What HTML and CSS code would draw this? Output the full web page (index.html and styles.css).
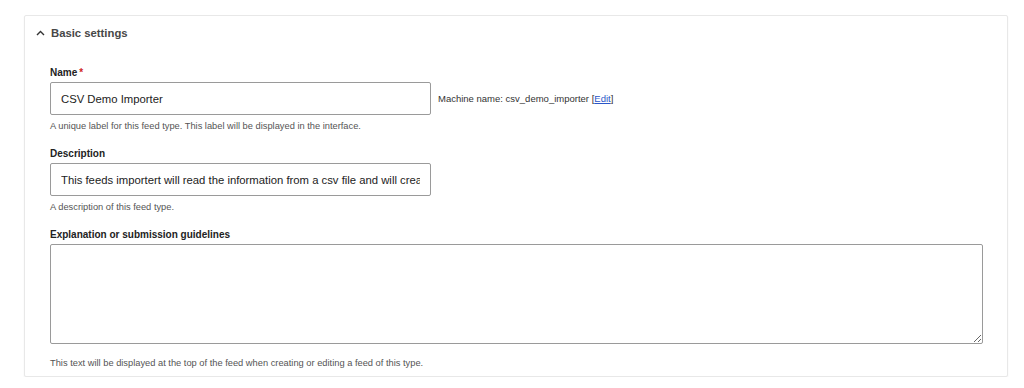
FILE: index.html
```html
<!DOCTYPE html>
<html lang="en">
<head>
    <meta charset="UTF-8">
    <meta name="viewport" content="width=device-width, initial-scale=1.0">
    <title>Basic settings</title>
    <link rel="stylesheet" href="styles.css">
</head>
<body>

    <details class="settings-card" open>
        <summary class="card-title">
            <svg class="chevron" width="9" height="6" viewBox="0 0 9 6">
                <path d="M1 5 L4.5 1.5 L8 5" fill="none" stroke="#333" stroke-width="1.4"/>
            </svg>
            Basic settings
        </summary>

        <div class="card-body">
            <div class="form-item">
                <label class="form-label" for="name">Name<span class="required">*</span></label>
                <div class="name-row">
                    <input type="text" id="name" class="form-input" value="CSV Demo Importer">
                    <span class="machine-name">Machine name: csv_demo_importer [<a href="#">Edit</a>]</span>
                </div>
                <div class="form-hint">A unique label for this feed type. This label will be displayed in the interface.</div>
            </div>

            <div class="form-item">
                <label class="form-label" for="description">Description</label>
                <input type="text" id="description" class="form-input" value="This feeds importert will read the information from a csv file and will create nodes">
                <div class="form-hint">A description of this feed type.</div>
            </div>

            <div class="form-item">
                <label class="form-label" for="help">Explanation or submission guidelines</label>
                <textarea id="help" class="form-textarea"></textarea>
                <div class="form-hint textarea-hint">This text will be displayed at the top of the feed when creating or editing a feed of this type.</div>
            </div>
        </div>
    </details>

</body>
</html>
```

FILE: styles.css
```css
body {
    font-family: 'Liberation Sans', Arial, sans-serif;
    background-color: #fff;
    margin: 0;
    padding: 15px 16px 0 24px;
    color: #222;
}

.settings-card {
    border: 1px solid #e8e8e8;
    border-radius: 2px;
    box-shadow: 0 1px 2px rgba(0, 0, 0, 0.06);
    background-color: #fff;
    height: 362px;
    box-sizing: border-box;
}

.card-title {
    list-style: none;
    display: flex;
    align-items: center;
    gap: 6px;
    padding-left: 11px;
    height: 34px;
    font-size: 11.3px;
    font-weight: bold;
    color: #474747;
    cursor: pointer;
}

.card-title::-webkit-details-marker {
    display: none;
}

.card-body {
    padding: 17px 24px 0 25px;
}

.form-item {
    margin-bottom: 16px;
}

.form-label {
    display: block;
    font-size: 10px;
    line-height: 12px;
    font-weight: bold;
    color: #222;
    margin-bottom: 3px;
}

.required {
    color: #d0261f;
    margin-left: 2px;
}

.name-row {
    display: flex;
    align-items: center;
    gap: 7px;
}

.form-input {
    display: block;
    width: 381px;
    height: 33px;
    box-sizing: border-box;
    border: 1px solid #9a9a9a;
    border-radius: 2px;
    padding: 0 10px;
    font-family: inherit;
    font-size: 11.3px;
    color: #222;
    outline: none;
}

.machine-name {
    font-size: 9.5px;
    color: #333;
}

.machine-name a {
    color: #2a55c8;
}

.form-hint {
    font-size: 9.3px;
    line-height: 11px;
    color: #555;
    margin-top: 6px;
}

.form-textarea {
    display: block;
    width: 933px;
    height: 100px;
    box-sizing: border-box;
    border: 1px solid #9a9a9a;
    border-radius: 2px;
    font-family: inherit;
    outline: none;
}

.textarea-hint {
    margin-top: 14px;
}
```
